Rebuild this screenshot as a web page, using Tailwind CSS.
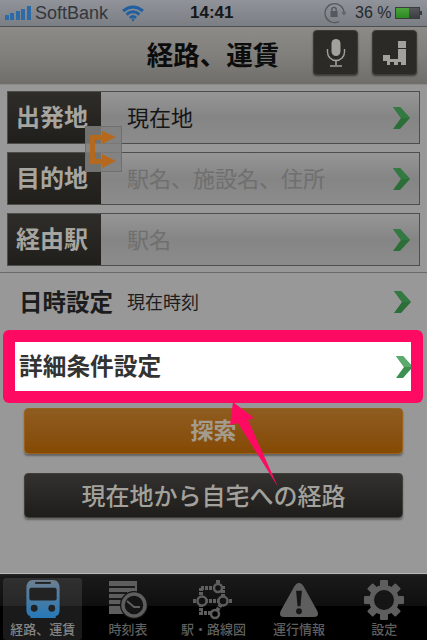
<!DOCTYPE html>
<html>
<head>
<meta charset="utf-8" />
<title>経路、運賃</title>
<script src="https://cdn.jsdelivr.net/npm/@tailwindcss/browser@4"></script>
</head>
<body class="bg-[#989898]">
<div class="relative w-[427px] h-[640px] overflow-hidden bg-[#989898] font-['Noto_Sans_CJK_JP','Liberation_Sans',sans-serif]">

  <!-- status bar -->
  <div class="h-[27px] flex items-center pl-[5px] pr-[5px] bg-gradient-to-b from-[#90939a] to-[#7b7e83] border-b border-[#4d4f52] font-['Liberation_Sans',sans-serif]">
    <svg width="27" height="16" viewBox="0 0 27 16" class="shrink-0">
      <rect x="0" y="10" width="4" height="5" fill="#2c6aa8"/><rect x="5" y="8" width="4" height="7" fill="#2c6aa8"/><rect x="11" y="6" width="4" height="9" fill="#2c6aa8"/><rect x="16" y="4" width="4" height="11" fill="#2c6aa8"/><rect x="22" y="1" width="4" height="14" fill="#2c6aa8"/>
    </svg>
    <span class="ml-[3px] text-[18px] font-medium text-[#33373c] w-[84px]">SoftBank</span>
    <svg width="22" height="17" viewBox="0 0 22 17" class="shrink-0 ml-[3px]" fill="none" stroke="#225f9e" stroke-width="3">
      <path d="M1 6 Q11 -2 21 6"/><path d="M4.5 9.5 Q11 4 17.5 9.5"/><path d="M8 13 Q11 10 14 13"/><circle cx="11" cy="15" r="1.2" fill="#225f9e" stroke="none"/>
    </svg>
    <span class="ml-[46px] w-[48px] text-[17px] font-bold text-[#15171a]">14:41</span>
    <svg width="24" height="22" viewBox="0 0 24 22" class="shrink-0 ml-[85px]" fill="none" stroke="#55585c" stroke-width="1.3">
      <path d="M21 11 A9.5 9.5 0 1 0 16 19.5"/><path d="M19 10 L21 13 L23 10" stroke-width="1"/><rect x="7.5" y="9" width="7" height="6" fill="#55585c" stroke="none"/><path d="M8.8 9 V7.5 a2.2 2.2 0 0 1 4.4 0 V9"/>
    </svg>
    <span class="ml-[8px] w-[36px] text-[16px] font-medium text-[#25282c] whitespace-nowrap">36 %</span>
    <div class="relative w-[25px] h-[12px] border border-[#3a3c3e] bg-gradient-to-b from-[#55575a] to-[#3c3e40] ml-[4px] shrink-0">
      <div class="w-[13px] h-full bg-gradient-to-b from-[#4ca33c] to-[#2a8a20]"></div>
      <div class="absolute -right-[3px] top-[3px] w-[2px] h-[4px] bg-[#3a3c3e]"></div>
    </div>
  </div>

  <!-- nav bar -->
  <div class="relative h-[58px] flex items-center justify-center bg-gradient-to-b from-[#8c8b87] via-[#807f7b] to-[#6f6e6a] border-b border-[#8a8a86]">
    <h1 class="text-[26.5px] font-bold text-[#0c0c0c] leading-none -ml-[1px] -mt-[3px]">経路、運賃</h1>
    <div class="absolute left-[313px] top-[3px] w-[45px] h-[45px] rounded-[4px] bg-[#2c2a27] border border-[#3d3b37] shadow-[0_1px_2px_rgba(0,0,0,0.5)] flex items-center justify-center">
      <svg width="22" height="30" viewBox="0 0 22 30" fill="none">
        <rect x="6.5" y="1" width="9" height="17" rx="4.5" fill="#a2a19c"/><path d="M2.5 11 V14 a8.5 8.5 0 0 0 17 0 V11" stroke="#a2a19c" stroke-width="1.4"/><path d="M11 23 V27 M5 28 H17" stroke="#a2a19c" stroke-width="1.6"/>
      </svg>
    </div>
    <div class="absolute left-[372px] top-[3px] w-[45px] h-[45px] rounded-[4px] bg-[#2c2a27] border border-[#3d3b37] shadow-[0_1px_2px_rgba(0,0,0,0.5)] flex items-center justify-center">
      <svg width="28" height="28" viewBox="0 0 28 28">
        <path fill="#a2a19c" d="M17 2 H25 V26 H20 V23 H17 V26 H13 V23 H9 V26 H6 V22 H2 V16 H9 V20 H17 Z"/>
        <path fill="#2c2a27" d="M17 9 H25 V10 H17 Z"/>
      </svg>
    </div>
  </div>

  <!-- inputs -->
  <div class="px-[7px] pt-[6px] pb-[6px] flex flex-col gap-[8px] border-b border-[#6b6b6b]">
    <div class="h-[53px] w-[413px] flex border border-[#4d4d4b] bg-gradient-to-b from-[#969696] via-[#858585] to-[#8c8c8c]">
      <div class="w-[93px] h-full bg-gradient-to-b from-[#2f2d2a] to-[#201f1c] flex items-center justify-center text-[24px] font-bold text-[#a6a5a0] pr-[5px] pb-[3px]">出発地</div>
      <div class="flex-1 flex items-center pl-[26px] pb-[3px] text-[22px] text-[#161616]">現在地</div>
      <svg width="20" height="24" viewBox="0 0 20 24" class="self-center mr-[7px]"><path d="M1 1 H8 L18 12 L8 23 H1 L9 12 Z" fill="#2c6e38"/><path d="M1 1 H8 L18 12 H9 Z" fill="#337a42"/></svg>
    </div>
    <div class="h-[53px] w-[413px] flex border border-[#4d4d4b] bg-gradient-to-b from-[#969696] via-[#858585] to-[#8c8c8c]">
      <div class="w-[93px] h-full bg-gradient-to-b from-[#2f2d2a] to-[#201f1c] flex items-center justify-center text-[24px] font-bold text-[#a6a5a0] pr-[5px] pb-[3px]">目的地</div>
      <div class="flex-1 flex items-center pl-[26px] pb-[3px] text-[22px] text-[#6f6f6f] whitespace-nowrap">駅名、施設名、住所</div>
      <svg width="20" height="24" viewBox="0 0 20 24" class="self-center mr-[7px]"><path d="M1 1 H8 L18 12 L8 23 H1 L9 12 Z" fill="#2c6e38"/><path d="M1 1 H8 L18 12 H9 Z" fill="#337a42"/></svg>
    </div>
    <div class="h-[53px] w-[413px] flex border border-[#4d4d4b] bg-gradient-to-b from-[#969696] via-[#858585] to-[#8c8c8c]">
      <div class="w-[93px] h-full bg-gradient-to-b from-[#2f2d2a] to-[#201f1c] flex items-center justify-center text-[24px] font-bold text-[#a6a5a0] pr-[5px] pb-[3px]">経由駅</div>
      <div class="flex-1 flex items-center pl-[26px] pb-[3px] text-[22px] text-[#6f6f6f]">駅名</div>
      <svg width="20" height="24" viewBox="0 0 20 24" class="self-center mr-[7px]"><path d="M1 1 H8 L18 12 L8 23 H1 L9 12 Z" fill="#2c6e38"/><path d="M1 1 H8 L18 12 H9 Z" fill="#337a42"/></svg>
    </div>
  </div>

  <!-- date row -->
  <div class="h-[57px] flex items-center pl-[19px] pr-[14px]">
    <span class="text-[23.5px] font-bold text-[#1c1c1c] w-[108px] whitespace-nowrap">日時設定</span>
    <span class="text-[18px] text-[#1c1c1c]">現在時刻</span>
    <svg width="20" height="24" viewBox="0 0 20 24" class="ml-auto"><path d="M1 1 H8 L18 12 L8 23 H1 L9 12 Z" fill="#2c6e38"/><path d="M1 1 H8 L18 12 H9 Z" fill="#337a42"/></svg>
  </div>

  <!-- highlighted row -->
  <div class="mx-[3px] w-[420px] h-[73px] rounded-[6px] bg-[#ff0a62] p-[12px]">
    <div class="h-[49px] bg-white flex items-center pl-[4px] relative">
      <span class="text-[23.7px] font-bold text-[#333] whitespace-nowrap -mt-[2px]">詳細条件設定</span>
      <svg width="16" height="24" viewBox="0 0 16 24" class="ml-auto"><path d="M1 1 H8 L16 10 V14 L8 23 H1 L9 12 Z" fill="#3c9150"/><path d="M1 1 H8 L16 10 V12 H9 Z" fill="#5cab6d"/></svg>
    </div>
  </div>

  <!-- buttons -->
  <div class="px-[24px] pt-[5px] flex flex-col gap-[19px]">
    <div class="h-[46px] w-[379px] rounded-[4px] bg-gradient-to-b from-[#8f5c1f] to-[#854a03] border border-[#99611b] shadow-[0_2px_2px_rgba(0,0,0,0.35)] flex items-center justify-center pb-[3px] text-[23px] font-bold text-[#a39c8e]">探索</div>
    <div class="h-[45px] w-[379px] rounded-[4px] bg-gradient-to-b from-[#33322f] to-[#1e1d1b] border border-[#3f3e3b] shadow-[0_2px_2px_rgba(0,0,0,0.35)] flex items-center justify-center pb-[2px] text-[24px] font-medium text-[#a2a19c] whitespace-nowrap">現在地から自宅への経路</div>
  </div>

  <!-- tab bar -->
  <div class="absolute left-0 right-0 bottom-0 h-[67px] border-t border-[#b8b8b8] bg-[linear-gradient(#2a2a2a_0,#1a1a1a_3%,#0f0f0f_48%,#000_49%,#000_100%)] grid grid-cols-5 text-[13px] leading-[17px] text-[#5f5f5f] font-medium">
    <div class="ml-[3px] mr-[3px] mt-[4px] rounded-[3px] bg-white/10 flex flex-col items-center justify-between pb-[3px] pt-[1px] text-[#858585] whitespace-nowrap">
      <svg width="38" height="41" viewBox="0 0 38 42">
        <defs><linearGradient id="bus" x1="0" y1="0" x2="0" y2="1"><stop offset="0" stop-color="#6d7f90"/><stop offset="1" stop-color="#2579b8"/></linearGradient></defs>
        <path fill="url(#bus)" d="M8 1 H30 Q36 2 36 9 V32 Q36 37 32 38 V40 H6 V38 Q2 37 2 32 V9 Q2 2 8 1 Z"/>
        <rect x="5" y="9" width="28" height="13" rx="2" fill="#222"/><rect x="11" y="3" width="16" height="2" fill="#222"/><circle cx="10" cy="30" r="3.5" fill="#222"/><circle cx="28" cy="30" r="3.5" fill="#222"/>
      </svg>
      <span>経路、運賃</span>
    </div>
    <div class="flex flex-col items-center justify-between pt-[6px] pb-[3px]">
      <svg width="42" height="40" viewBox="0 0 42 40"><rect x="2" y="1" width="28" height="33" fill="#5e5e5e"/><path d="M2 7 H28 M2 13 H20 M2 19 H16 M2 25 H14" stroke="#1a1a1a" stroke-width="2"/><circle cx="27" cy="25" r="14" fill="#141414"/><circle cx="27" cy="25" r="11" fill="none" stroke="#5e5e5e" stroke-width="3.5"/><path d="M20 21 L27 27 H33" fill="none" stroke="#5e5e5e" stroke-width="2"/></svg>
      <span>時刻表</span>
    </div>
    <div class="flex flex-col items-center justify-between pt-[5px] pb-[3px]">
      <svg width="42" height="41" viewBox="0 0 42 41" fill="none" stroke="#5e5e5e" stroke-width="4">
        <path d="M9 9 H31 V22 M9 9 V34 H23 M1 22 H40 M31 22 L23 35 M26 1 V9" stroke-dasharray="3 1"/>
        <circle cx="26" cy="9" r="4" fill="#111" stroke-width="2.5"/><circle cx="10" cy="22" r="4.5" fill="#111" stroke-width="2.5"/><circle cx="31" cy="22" r="4.5" fill="#111" stroke-width="2.5"/><circle cx="23" cy="35" r="4" fill="#000" stroke-width="2.5"/>
      </svg>
      <span class="whitespace-nowrap">駅・路線図</span>
    </div>
    <div class="flex flex-col items-center justify-between pt-[8px] pb-[3px]">
      <svg width="42" height="37" viewBox="0 0 42 38"><path fill="#5e5e5e" d="M21 1 Q24 1 26 5 L40 30 Q42 36 36 36 H6 Q0 36 2 30 L16 5 Q18 1 21 1 Z"/><path fill="#161616" d="M18 9 H24 L22.5 25 H19.5 Z"/><circle cx="21" cy="30" r="3" fill="#161616"/></svg>
      <span class="whitespace-nowrap">運行情報</span>
    </div>
    <div class="flex flex-col items-center justify-between pt-[6px] pb-[3px]">
      <svg width="40" height="40" viewBox="0 0 40 40"><g fill="#5e5e5e"><circle cx="20" cy="20" r="15"/><rect x="16" y="0" width="8" height="40" rx="1"/><rect x="0" y="16" width="40" height="8" rx="1"/><rect x="16" y="0" width="8" height="40" rx="1" transform="rotate(45 20 20)"/><rect x="16" y="0" width="8" height="40" rx="1" transform="rotate(-45 20 20)"/></g><circle cx="20" cy="20" r="10" fill="#151515"/></svg>
      <span>設定</span>
    </div>
  </div>

  <!-- swap button over the first two rows -->
  <div class="absolute left-[85px] top-[126px] w-[37px] h-[46px] bg-[#808080]/85 border border-[#6f6f6f]">
    <svg width="35" height="44" viewBox="0 0 35 44" fill="none">
      <path d="M4 8 H16 V4 L30 10 L16 17 V13 H9 V32 H16 V27 L30 34 L16 41 V37 H4 Z" fill="#b5691e"/>
    </svg>
  </div>

  <!-- pink callout arrow -->
  <svg class="absolute left-0 top-0" width="427" height="640" viewBox="0 0 427 640">
    <path fill="#ff0a62" d="M233 402 L254 418 L248 420 L278 487 L238 423 L230 425 Z"/>
  </svg>
</div>
</body>
</html>
